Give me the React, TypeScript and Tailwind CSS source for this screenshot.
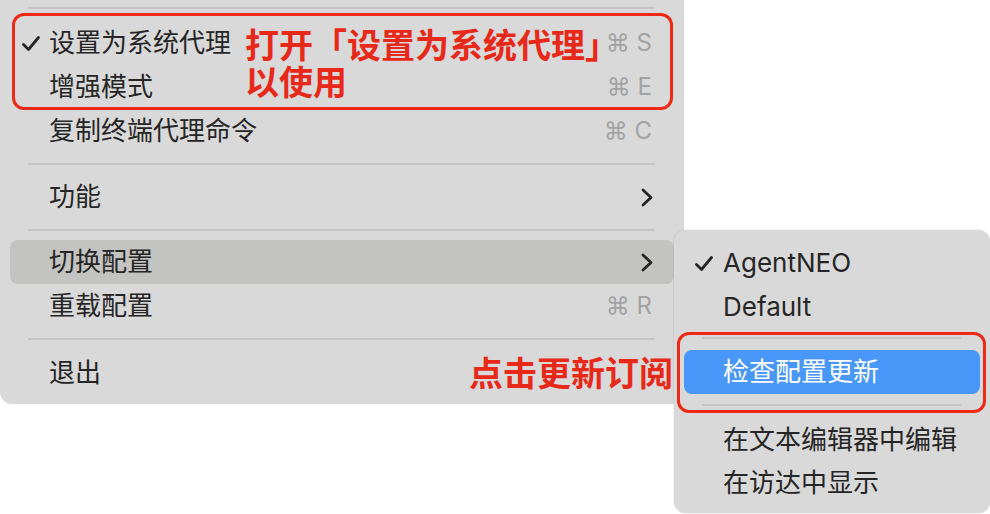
import React from "react";

const Check = ({ className }: { className?: string }) => (
  <svg className={className} width="18" height="16" viewBox="0 0 18 16" fill="none">
    <polyline points="1.5,8.5 6.5,13.5 16.5,1.5" stroke="#262626" strokeWidth="2.8" strokeLinecap="round" strokeLinejoin="round" />
  </svg>
);

const Chevron = () => (
  <svg width="12" height="19" viewBox="0 0 12 19" fill="none">
    <polyline points="2,2 10,9.5 2,17" stroke="#262626" strokeWidth="2.8" strokeLinecap="round" strokeLinejoin="round" />
  </svg>
);

const Sep = ({ h, top }: { h: string; top: string }) => (
  <div className={`${h} relative`}>
    <div className={`absolute left-[28px] right-[29px] ${top} h-[2px] bg-[#c5c5c5]`} />
  </div>
);

function Row({
  label,
  checked,
  shortcut,
  sub,
  highlight,
}: {
  label: string;
  checked?: boolean;
  shortcut?: string;
  sub?: boolean;
  highlight?: boolean;
}) {
  return (
    <div
      className={`relative h-[44px] mx-[10px] rounded-[8px] pl-[39px] pr-[21px] flex items-center justify-between ${
        highlight ? "bg-[#c3c3c1]" : ""
      }`}
    >
      {checked && <Check className="absolute left-[12px] top-[15px]" />}
      <span className="text-[26px] leading-none text-[#262626]">{label}</span>
      {shortcut && (
        <span className="text-[24px] leading-none text-[#a3a3a3] font-['Inter','DejaVu_Sans',sans-serif] pr-[1px]">
          ⌘ {shortcut}
        </span>
      )}
      {sub && <Chevron />}
    </div>
  );
}

function SubRow({
  label,
  checked,
  active,
  h = "h-[44px]",
}: {
  label: string;
  checked?: boolean;
  active?: boolean;
  h?: string;
}) {
  return (
    <div
      className={`relative ${h} mx-[10px] rounded-[8px] pl-[39px] flex items-center ${
        active ? "bg-[#4997f8] text-white" : "text-[#262626]"
      }`}
    >
      {checked && <Check className="absolute left-[11px] top-[15px]" />}
      <span className="text-[26px] leading-none">{label}</span>
    </div>
  );
}

export default function App() {
  return (
    <div className="relative w-[990px] h-[514px] bg-white overflow-hidden flex items-start font-['Inter','Noto_Sans_CJK_SC',sans-serif]">
      {/* main menu */}
      <div className="w-[684px] h-[404px] shrink-0 bg-[#d9d9d9] rounded-bl-[12px] flex flex-col">
        <Sep h="h-[21px]" top="top-[7px]" />
        <Row label="设置为系统代理" checked shortcut="S" />
        <Row label="增强模式" shortcut="E" />
        <Row label="复制终端代理命令" shortcut="C" />
        <Sep h="h-[22px]" top="top-[10px]" />
        <Row label="功能" sub />
        <Sep h="h-[21px]" top="top-[10px]" />
        <Row label="切换配置" sub highlight />
        <Row label="重载配置" shortcut="R" />
        <Sep h="h-[23px]" top="top-[10px]" />
        <Row label="退出" />
      </div>

      {/* submenu */}
      <div className="relative -ml-[10px] mt-[230px] w-[316px] h-[283px] shrink-0 bg-[#d9d9d9] rounded-[12px] shadow-[0_0_2px_rgba(0,0,0,0.18)] pt-[11px] flex flex-col">
        <SubRow label="AgentNEO" checked />
        <SubRow label="Default" />
        <Sep h="h-[21px]" top="top-[8px]" />
        <SubRow label="检查配置更新" active h="h-[44px]" />
        <Sep h="h-[24px]" top="top-[10px]" />
        <SubRow label="在文本编辑器中编辑" h="h-[43px]" />
        <SubRow label="在访达中显示" h="h-[43px]" />
      </div>

      {/* annotations */}
      <div className="absolute left-[12px] top-[13px] w-[661px] h-[97px] border-[3px] border-[#ee2a17] rounded-[12px]" />
      <div className="absolute left-[245px] top-[25px] text-[34px] leading-[37px] font-bold text-[#e8291a] font-['Noto_Sans_CJK_SC',sans-serif]">
        <div>打开「设置为系统代理」</div>
        <div>以使用</div>
      </div>
      <div className="absolute left-[469px] top-[353px] text-[34px] leading-[37px] font-bold text-[#e8291a] font-['Noto_Sans_CJK_SC',sans-serif]">
        点击更新订阅
      </div>
      <div className="absolute left-[677px] top-[332px] w-[309px] h-[81px] border-[3px] border-[#ee2a17] rounded-[12px]" />
    </div>
  );
}
